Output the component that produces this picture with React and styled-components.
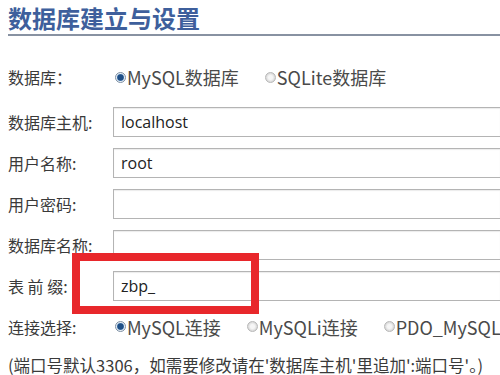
import React from "react";
import styled, { createGlobalStyle } from "styled-components";

const GlobalStyle = createGlobalStyle`
  html, body { margin: 0; padding: 0; background: #fff; }
  body {
    font-family: "Noto Sans CJK SC", sans-serif;
    color: #333;
  }
`;

const Page = styled.div`
  position: relative;
  width: 500px;
  height: 375px;
  overflow: hidden;
  padding-left: 8px;
  box-sizing: border-box;
  background: #fff;
`;

const Title = styled.h1`
  margin: 0;
  padding: 4px 0 2px;
  font-family: "Noto Sans CJK SC", sans-serif;
  font-size: 24px;
  line-height: 28px;
  font-weight: 700;
  color: #3e5f9c;
  border-bottom: 2px solid #8892a2;
  white-space: nowrap;
`;

const Form = styled.div`
  padding-top: 17px;
`;

const Row = styled.div`
  position: relative;
  display: flex;
  align-items: center;
  height: ${(p) => p.$h || 41}px;
  white-space: nowrap;
`;

const Label = styled.div`
  width: ${(p) => p.$w || 105}px;
  flex-shrink: 0;
  font-size: 16px;
  color: #3a3a3a;
`;

const TextInput = styled.div`
  flex-shrink: 0;
  width: 387px;
  height: 30px;
  box-sizing: border-box;
  border: 1px solid #b4b4b4;
  border-right: none;
  box-shadow: inset 0 1px 1px rgba(0, 0, 0, 0.08);
  padding: 0 7px;
  display: flex;
  align-items: center;
  font-family: "Open Sans", "Noto Sans CJK SC", sans-serif;
  font-size: 16px;
  color: #222;
  background: #fff;
`;

const Options = styled.div`
  display: flex;
  align-items: center;
  gap: 26px;
  min-width: 0;
  overflow: hidden;
`;

const Option = styled.label`
  display: inline-flex;
  align-items: center;
  flex-shrink: 0;
  font-size: 18px;
  color: #4a4a4a;
`;

const Radio = styled.span`
  width: 11px;
  height: 11px;
  border-radius: 50%;
  box-sizing: border-box;
  border: 1px solid ${(p) => (p.$checked ? "#7d8fa3" : "#b8b8b8")};
  background: ${(p) =>
    p.$checked
      ? "radial-gradient(circle, #1f4f86 0 2.8px, #6f9bc8 3.4px, #e8eef4 3.9px)"
      : "radial-gradient(circle, #f6f6f6 0 2px, #d8d8d8 4.5px)"};
  margin-right: 1px;
  flex-shrink: 0;
`;

const Highlight = styled.div`
  position: absolute;
  left: 64px;
  top: -12px;
  width: 187px;
  height: 61px;
  box-sizing: border-box;
  border: 8px solid #e8272b;
  z-index: 2;
  pointer-events: none;
`;

const Note = styled.div`
  width: max-content;
  padding-top: 8px;
  font-size: 16.5px;
  line-height: 20px;
  color: #3a3a3a;
  white-space: nowrap;
`;

export default function App() {
  return (
    <>
      <GlobalStyle />
      <Page>
        <Title>数据库建立与设置</Title>
        <Form>
          <Row $h={48}>
            <Label $w={107}>数据库：</Label>
            <Options>
              <Option>
                <Radio $checked />
                MySQL数据库
              </Option>
              <Option>
                <Radio />
                SQLite数据库
              </Option>
            </Options>
          </Row>
          <Row>
            <Label>数据库主机:</Label>
            <TextInput>localhost</TextInput>
          </Row>
          <Row>
            <Label>用户名称:</Label>
            <TextInput>root</TextInput>
          </Row>
          <Row>
            <Label>用户密码:</Label>
            <TextInput />
          </Row>
          <Row>
            <Label>数据库名称:</Label>
            <TextInput />
          </Row>
          <Row>
            <Label>表 前 缀:</Label>
            <TextInput>zbp_</TextInput>
            <Highlight />
          </Row>
          <Row>
            <Label $w={107}>连接选择:</Label>
            <Options>
              <Option>
                <Radio $checked />
                MySQL连接
              </Option>
              <Option>
                <Radio />
                MySQLi连接
              </Option>
              <Option>
                <Radio />
                PDO_MySQL连接
              </Option>
            </Options>
          </Row>
          <Note>(端口号默认3306，如需要修改请在'数据库主机'里追加':端口号'。)</Note>
        </Form>
      </Page>
    </>
  );
}
